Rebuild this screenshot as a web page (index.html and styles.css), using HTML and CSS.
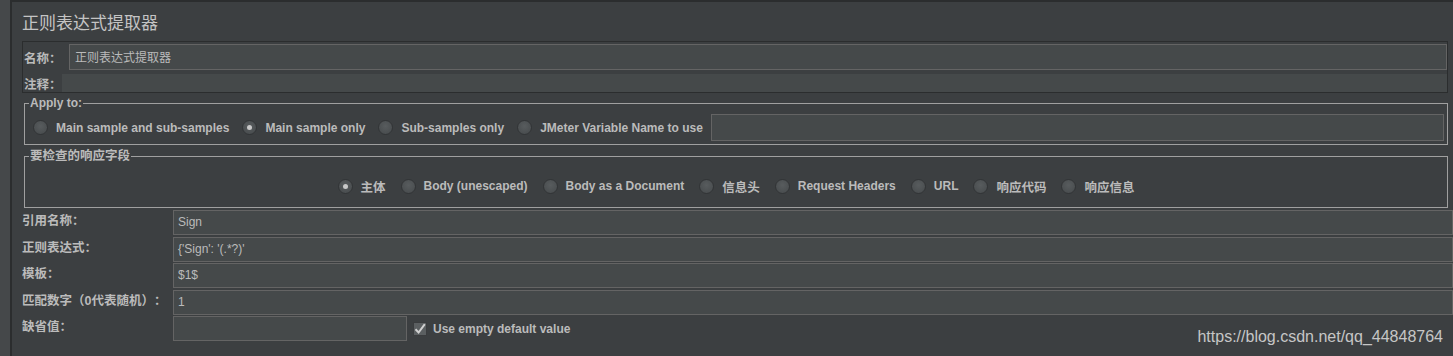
FILE: index.html
```html
<!DOCTYPE html>
<html lang="zh-CN">
<head>
  <meta charset="UTF-8" />
  <title>正则表达式提取器</title>
  <link rel="stylesheet" href="styles.css">
</head>
<body>
  <div class="window">
    <div class="side"></div>
    <div class="main">
      <h1 class="title">正则表达式提取器</h1>

      <div class="name-panel">
        <div class="name-row">
          <span class="label name-label">名称：</span>
          <div class="field name-field">正则表达式提取器</div>
        </div>
        <div class="comment-row">
          <span class="label comment-label">注释：</span>
          <div class="comment-field"></div>
        </div>
      </div>

      <div class="group apply">
        <span class="group-title">Apply to:</span>
        <div class="options">
          <span class="option"><span class="radio"></span>Main sample and sub-samples</span>
          <span class="option"><span class="radio checked"></span>Main sample only</span>
          <span class="option"><span class="radio"></span>Sub-samples only</span>
          <span class="option last"><span class="radio"></span>JMeter Variable Name to use</span>
          <div class="field var-field"></div>
        </div>
      </div>

      <div class="group check">
        <span class="group-title cjk">要检查的响应字段</span>
        <div class="options centered">
          <span class="option cjk"><span class="radio checked"></span>主体</span>
          <span class="option"><span class="radio"></span>Body (unescaped)</span>
          <span class="option"><span class="radio"></span>Body as a Document</span>
          <span class="option cjk"><span class="radio"></span>信息头</span>
          <span class="option"><span class="radio"></span>Request Headers</span>
          <span class="option"><span class="radio"></span>URL</span>
          <span class="option cjk"><span class="radio"></span>响应代码</span>
          <span class="option cjk last"><span class="radio"></span>响应信息</span>
        </div>
      </div>

      <div class="form-grid">
        <span class="label">引用名称：</span>
        <div class="field">Sign</div>

        <span class="label">正则表达式：</span>
        <div class="field">{'Sign': '(.*?)'</div>

        <span class="label">模板：</span>
        <div class="field">$1$</div>

        <span class="label">匹配数字（0代表随机）：</span>
        <div class="field">1</div>

        <span class="label">缺省值：</span>
        <div class="default-row">
          <div class="field default-field"></div>
          <span class="checkbox">
            <svg width="14" height="14" viewBox="0 0 14 14">
              <path d="M2.5 7.2 L5.6 10.5 L11.8 2.2" fill="none" stroke="#d0d0d0" stroke-width="2"/>
            </svg>
          </span>
          <span class="check-text">Use empty default value</span>
        </div>
      </div>
    </div>
  </div>

  <div class="watermark">https://blog.csdn.net/qq_44848764</div>
</body>
</html>
```

FILE: styles.css
```css
body {
  margin: 0;
  background: #3c3f41;
  color: #bbbbbb;
  font-family: "Liberation Sans", "Noto Sans CJK SC", sans-serif;
  font-size: 12px;
  height: 356px;
  overflow: hidden;
  position: relative;
  text-spacing-trim: space-all;
}
.window {
  display: flex;
  height: 356px;
}
.side {
  width: 10px;
  background: #45484a;
  border-right: 2px solid #2b2d2e;
}
.main {
  flex: 1;
  border-top: 2px solid #2b2d2e;
}
.title {
  margin: 0 0 0 10px;
  height: 39px;
  line-height: 40px;
  font-size: 17px;
  font-weight: normal;
  color: #c4c4c4;
  font-family: "Noto Sans CJK SC", sans-serif;
}
.label {
  font-weight: bold;
  font-size: 12.5px;
  color: #bbbbbb;
  font-family: "Liberation Sans", "Noto Sans CJK SC", sans-serif;
  white-space: nowrap;
}
.cjk {
  font-size: 12.5px;
}
.field {
  box-sizing: border-box;
  height: 25px;
  background: #45494a;
  border: 1px solid #646464;
  padding: 0 4px;
  line-height: 23px;
  color: #bbbbbb;
  white-space: nowrap;
}

/* name / comment */
.name-panel {
  box-sizing: border-box;
  height: 52px;
  margin: 0 5px 0 10px;
  border: 1px solid #2b2d2e;
  padding: 2px 0 0 1px;
}
.name-row {
  display: flex;
  align-items: center;
  height: 26px;
}
.name-label {
  width: 45px;
}
.name-field {
  flex: 1;
  height: 26px;
  line-height: 24px;
  padding-left: 5px;
  font-family: "Noto Sans CJK SC", sans-serif;
}
.comment-row {
  display: flex;
  align-items: center;
  height: 18px;
  margin-top: 4px;
}
.comment-label {
  width: 38px;
}
.comment-field {
  flex: 1;
  height: 18px;
  background: #45494a;
}

/* groups */
.group {
  position: relative;
  box-sizing: border-box;
  margin: 0 5px 0 12px;
  border: 1px solid #a0a0a0;
}
.group-title {
  position: absolute;
  top: -8px;
  left: 4px;
  padding: 0 1px;
  line-height: 14px;
  background: #3c3f41;
  font-weight: bold;
  color: #bbbbbb;
}
.apply {
  margin-top: 10px;
  height: 42px;
  padding: 10px 3px 0 8px;
}
.check {
  margin-top: 11px;
  height: 52px;
  padding-top: 21px;
}
.options {
  display: flex;
  align-items: center;
  font-weight: bold;
  white-space: nowrap;
}
.options.centered {
  justify-content: center;
  height: 16px;
}
.option {
  display: flex;
  align-items: center;
  margin-right: 13px;
}
.centered .option {
  margin-right: 15px;
}
.option.last {
  margin-right: 8px;
}
.centered .option.last {
  margin-right: 0;
}
.radio {
  position: relative;
  box-sizing: border-box;
  width: 15px;
  height: 15px;
  margin-right: 8px;
  border-radius: 50%;
  border: 1px solid #323436;
  background: radial-gradient(circle at 50% 40%, #585c5e, #45494b);
}
.radio.checked::after {
  content: "";
  position: absolute;
  left: 4px;
  top: 4px;
  width: 5px;
  height: 5px;
  border-radius: 50%;
  background: #c8c8c8;
}
.var-field {
  flex: 1;
  height: 27px;
}

/* bottom form */
.form-grid {
  display: grid;
  grid-template-columns: 151px 1fr;
  row-gap: 1.5px;
  margin: 2px 0 0 10px;
}
.form-grid .label {
  line-height: 16px;
  padding-top: 3px;
}
.default-row {
  display: flex;
  align-items: center;
  height: 25px;
}
.default-field {
  width: 234px;
}
.checkbox {
  box-sizing: border-box;
  width: 14px;
  height: 14px;
  margin: 0 6px 0 6px;
  background: #5b5f61;
  border: 1px solid #3a3c3e;
  display: flex;
}
.checkbox svg {
  margin: -1px;
}
.check-text {
  font-weight: bold;
}

.watermark {
  position: absolute;
  right: 10px;
  bottom: 10px;
  font-size: 16px;
  color: #c6c6c6;
  font-family: "Liberation Sans", sans-serif;
}
```
